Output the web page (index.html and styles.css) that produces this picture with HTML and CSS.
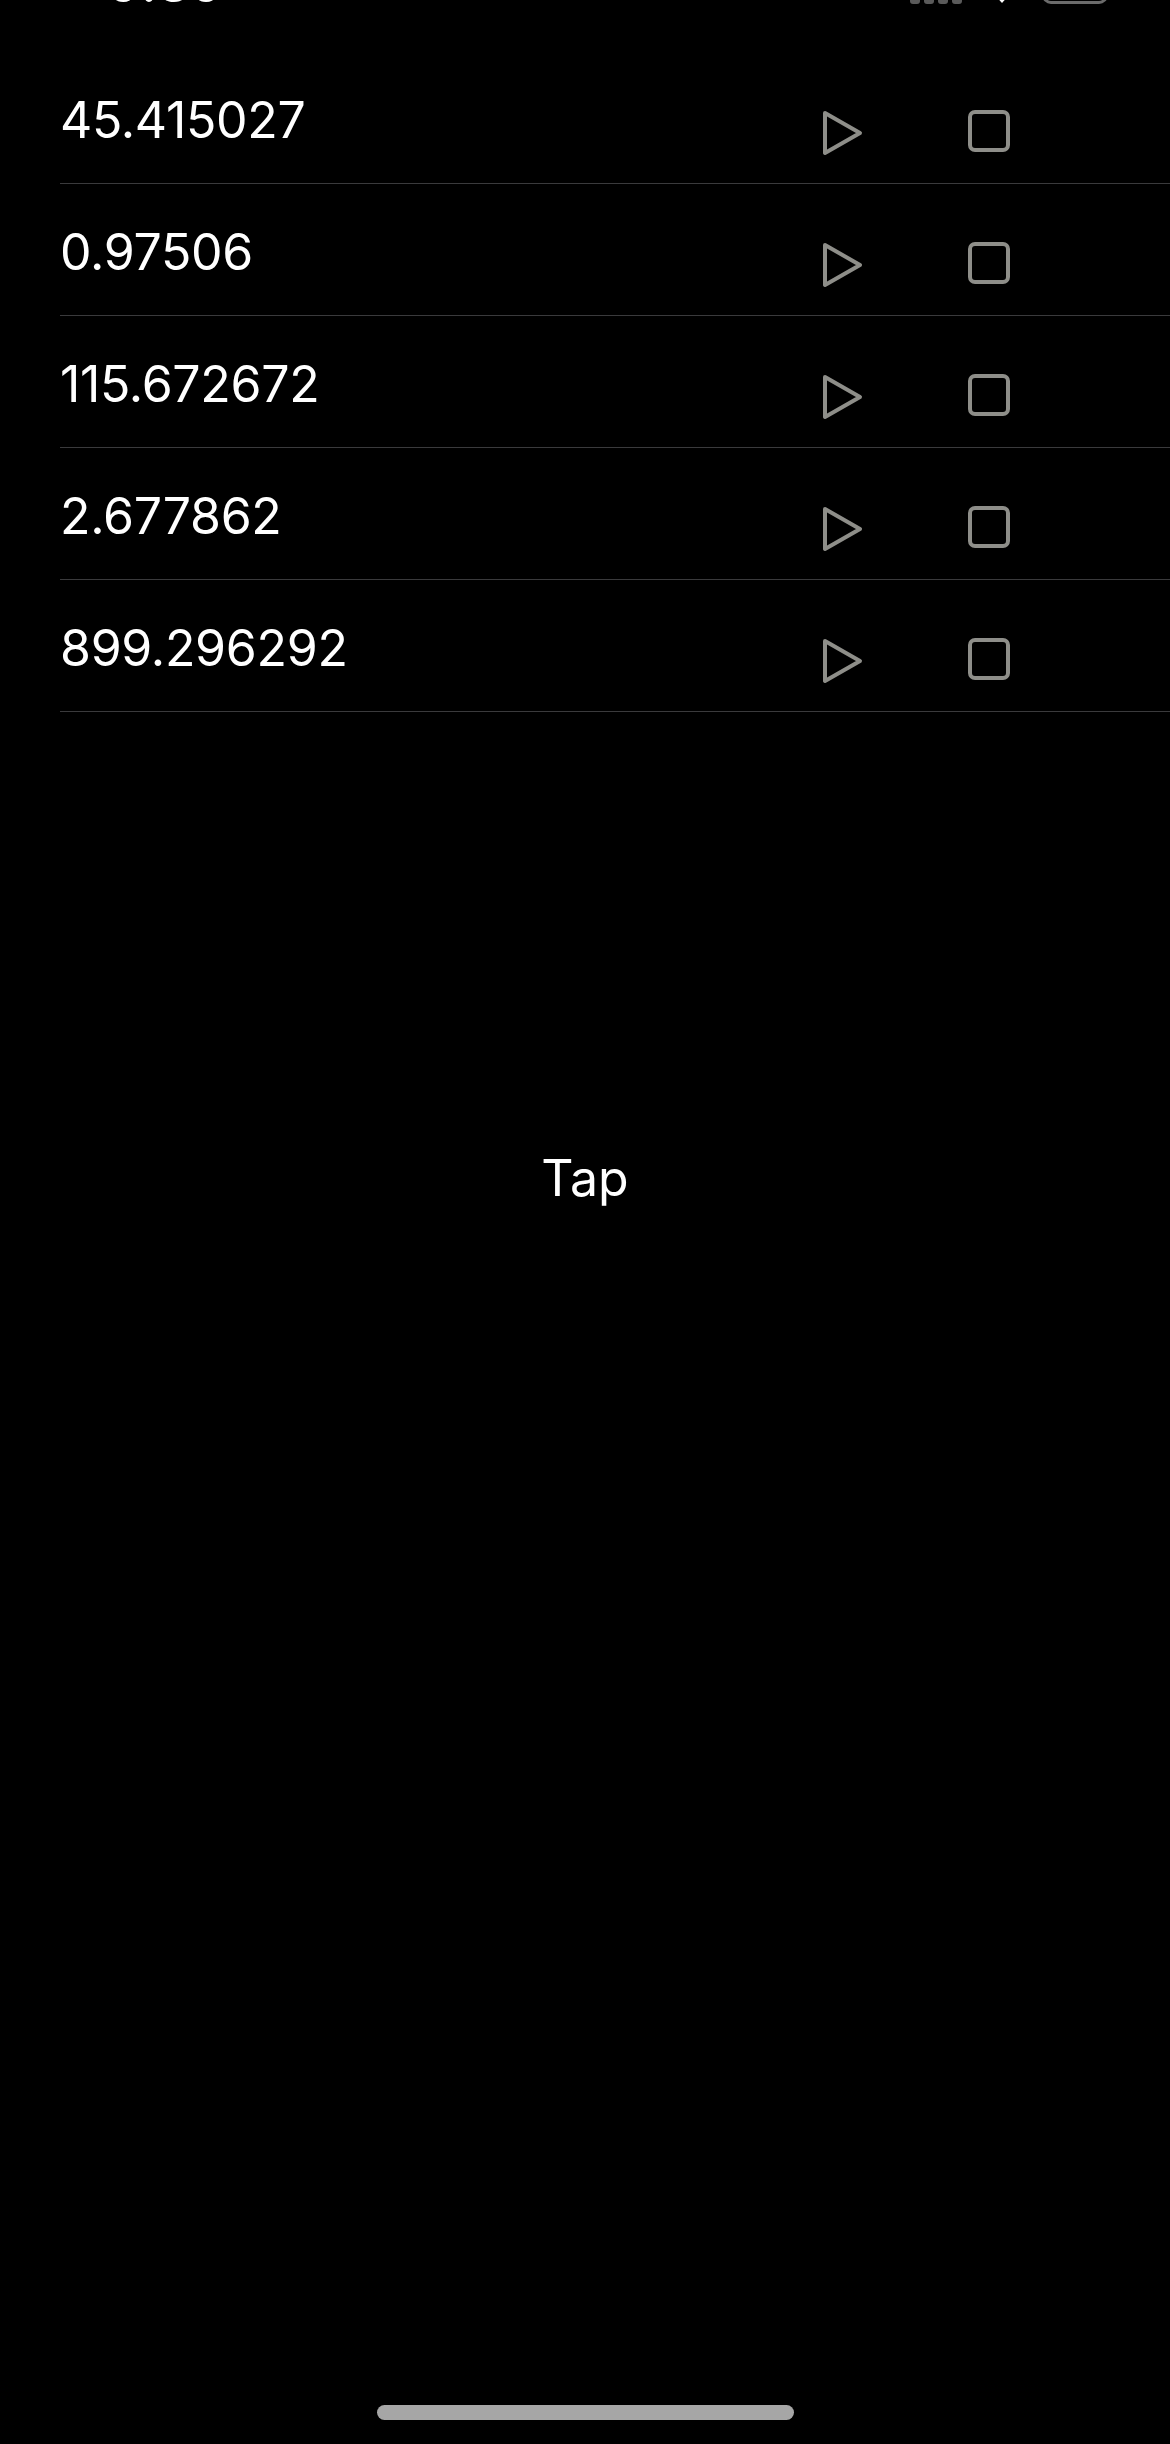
FILE: index.html
```html
<!DOCTYPE html>
<html>
<head>
<meta charset="utf-8">
<link rel="stylesheet" href="styles.css">
</head>
<body>
<div class="screen">
  <div class="top">
    <div class="statusbar">
      <span class="time">9:39</span>
      <span class="sb-right">
        <span class="signal"><i></i><i></i><i></i><i></i></span>
        <svg class="wifi" width="24" height="20" viewBox="0 0 24 20"><path d="M12 19 L4 10 Q12 4 20 10 Z" fill="#fff"/></svg>
        <span class="battery"></span>
      </span>
    </div>
  </div>
  <div class="list">
    <div class="row"><span class="val">45.415027</span><span class="btns"><svg class="ic" viewBox="0 0 48 48"><path d="M7 5 L42 25 L7 45 Z"/></svg><svg class="ic" viewBox="0 0 48 48"><rect x="5" y="4" width="38" height="38" rx="5"/></svg></span></div>
    <div class="row"><span class="val">0.97506</span><span class="btns"><svg class="ic" viewBox="0 0 48 48"><path d="M7 5 L42 25 L7 45 Z"/></svg><svg class="ic" viewBox="0 0 48 48"><rect x="5" y="4" width="38" height="38" rx="5"/></svg></span></div>
    <div class="row"><span class="val">115.672672</span><span class="btns"><svg class="ic" viewBox="0 0 48 48"><path d="M7 5 L42 25 L7 45 Z"/></svg><svg class="ic" viewBox="0 0 48 48"><rect x="5" y="4" width="38" height="38" rx="5"/></svg></span></div>
    <div class="row"><span class="val">2.677862</span><span class="btns"><svg class="ic" viewBox="0 0 48 48"><path d="M7 5 L42 25 L7 45 Z"/></svg><svg class="ic" viewBox="0 0 48 48"><rect x="5" y="4" width="38" height="38" rx="5"/></svg></span></div>
    <div class="row"><span class="val">899.296292</span><span class="btns"><svg class="ic" viewBox="0 0 48 48"><path d="M7 5 L42 25 L7 45 Z"/></svg><svg class="ic" viewBox="0 0 48 48"><rect x="5" y="4" width="38" height="38" rx="5"/></svg></span></div>
  </div>
  <div class="tap-area"><span class="tap">Tap</span></div>
  <div class="home-bar"><span class="indicator"></span></div>
</div>
</body>
</html>
```
FILE: styles.css
```css
html, body {
  margin: 0;
  padding: 0;
  background: #000;
}
.screen {
  width: 1170px;
  height: 2444px;
  background: #000;
  color: #fff;
  font-family: Inter, "Noto Sans", sans-serif;
  display: flex;
  flex-direction: column;
  overflow: hidden;
}
.top {
  height: 52px;
  overflow: hidden;
  flex: none;
}
.statusbar {
  height: 40px;
  margin-top: -36px;
  display: flex;
  justify-content: space-between;
  align-items: flex-end;
  padding: 0 62px 0 108px;
}
.time {
  font-size: 50px;
  font-weight: 600;
  line-height: 40px;
  letter-spacing: 1px;
}
.sb-right {
  display: flex;
  align-items: flex-end;
  gap: 28px;
}
.signal {
  display: flex;
  gap: 4px;
  align-items: flex-end;
}
.signal i {
  display: block;
  width: 10px;
  height: 30px;
  border-radius: 3px;
  background: #5a5a5a;
}
.wifi {
  display: block;
}
.battery {
  display: block;
  width: 60px;
  height: 30px;
  border: 3px solid #6b6b6b;
  border-radius: 9px;
}
.list {
  flex: none;
}
.row {
  margin-left: 60px;
  height: 132px;
  box-sizing: border-box;
  border-bottom: 1.5px solid #3a3a3c;
  display: flex;
  align-items: flex-start;
}
.val {
  flex: 1;
  font-size: 50px;
  line-height: 51px;
  padding-top: 43px;
  letter-spacing: -0.3px;
}
.btns {
  display: flex;
  gap: 99px;
  padding-top: 56px;
  margin-right: 157px;
}
.ic {
  width: 48px;
  height: 48px;
  fill: none;
  stroke: #8e8e89;
  stroke-width: 4;
  stroke-linejoin: round;
  display: block;
}
.tap-area {
  height: 932px;
  display: flex;
  justify-content: center;
  align-items: center;
  flex: none;
}
.tap {
  font-size: 50px;
  line-height: 60px;
}
.home-bar {
  flex: 1;
  display: flex;
  justify-content: center;
  align-items: flex-end;
  padding-bottom: 24px;
}
.indicator {
  width: 417px;
  height: 15px;
  border-radius: 8px;
  background: #a6a6a6;
}
```
